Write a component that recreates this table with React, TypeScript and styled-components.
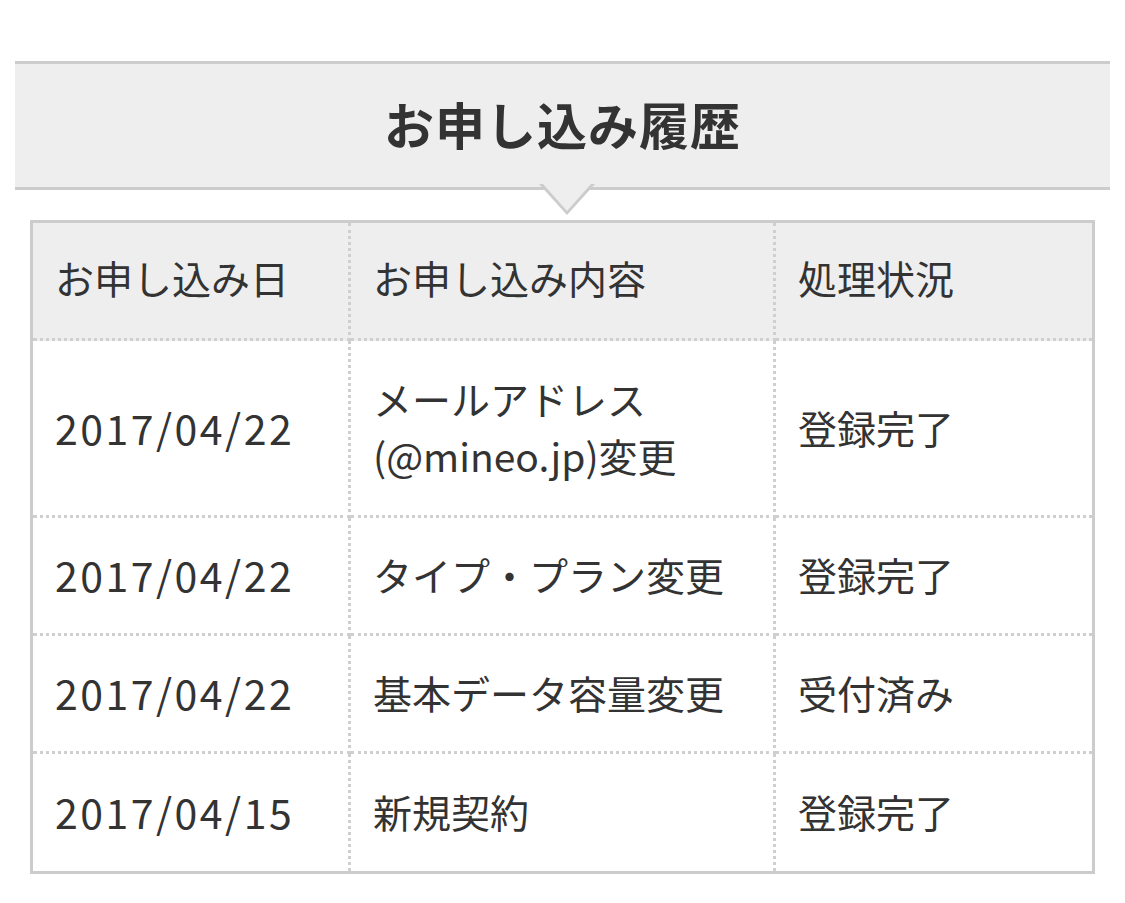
import React from "react";
import styled, { createGlobalStyle } from "styled-components";

const GlobalStyle = createGlobalStyle`
	body {
		margin: 0;
		background: #fff;
		font-family: "Noto Sans CJK JP", "Noto Sans", sans-serif;
		color: #333;
	}
`;

type Row = { date: string; content: string[]; status: string; height: number };

const rows: Row[] = [
	{ date: "2017/04/22", content: ["メールアドレス", "(@mineo.jp)変更"], status: "登録完了", height: 177 },
	{ date: "2017/04/22", content: ["タイプ・プラン変更"], status: "登録完了", height: 118 },
	{ date: "2017/04/22", content: ["基本データ容量変更"], status: "受付済み", height: 118 },
	{ date: "2017/04/15", content: ["新規契約"], status: "登録完了", height: 117 },
];

const DOTS = "3px dotted #cfcfcf";

export default function App() {
	return (
		<Page>
			<GlobalStyle />
			<Heading>
				<Title>お申し込み履歴</Title>
			</Heading>
			<HistoryTable>
				<colgroup>
					<col style={{ width: 318 }} />
					<col style={{ width: 425 }} />
					<col />
				</colgroup>
				<thead>
					<Tr $height={118}>
						<Th>お申し込み日</Th>
						<Th>お申し込み内容</Th>
						<Th $last>処理状況</Th>
					</Tr>
				</thead>
				<tbody>
					{rows.map((r, i) => (
						<Tr key={i} $height={r.height}>
							<DateCell $bottom={i === rows.length - 1}>{r.date}</DateCell>
							<Td $bottom={i === rows.length - 1}>
								{r.content.map((line, j) => (
									<Line key={j}>{line}</Line>
								))}
							</Td>
							<Td $bottom={i === rows.length - 1} $last>
								{r.status}
							</Td>
						</Tr>
					))}
				</tbody>
			</HistoryTable>
		</Page>
	);
}

const Page = styled.div`
	padding: 61px 15px 30px;
`;

const Heading = styled.div`
	position: relative;
	height: 123px;
	background: #eee;
	border-top: 3px solid #ccc;
	border-bottom: 3px solid #ccc;
	display: flex;
	align-items: center;
	justify-content: center;

	/* notch pointing down */
	&::before,
	&::after {
		content: "";
		position: absolute;
		left: 50%;
		width: 0;
		height: 0;
		border-style: solid;
	}
	&::before {
		top: 100%;
		margin-top: -3px;
		margin-left: -24px;
		border-width: 31px 28px 0 28px;
		border-color: #ccc transparent transparent transparent;
	}
	&::after {
		top: 100%;
		margin-top: -3px;
		margin-left: -20px;
		border-width: 27px 24px 0 24px;
		border-color: #eee transparent transparent transparent;
	}
`;

const Title = styled.h1`
	margin: 0;
	padding-bottom: 6px;
	font-size: 50px;
	font-weight: bold;
	color: #333;
	letter-spacing: 1px;
`;

const HistoryTable = styled.table`
	margin: 30px 15px 0;
	width: calc(100% - 30px);
	border-collapse: separate;
	border-spacing: 0;
	table-layout: fixed;
	border: 3px solid #ccc;
`;

const Tr = styled.tr<{ $height: number }>`
	height: ${(p) => p.$height}px;
`;

const Th = styled.th<{ $last?: boolean }>`
	background: #eee;
	text-align: left;
	font-weight: normal;
	font-size: 39px;
	padding: 0 22px 8px;
	border-right: ${(p) => (p.$last ? "none" : DOTS)};
	border-bottom: ${DOTS};
	vertical-align: middle;
`;

const Td = styled.td<{ $last?: boolean; $bottom?: boolean }>`
	font-size: 39px;
	line-height: 57px;
	padding: 0 22px 2px;
	border-right: ${(p) => (p.$last ? "none" : DOTS)};
	border-bottom: ${(p) => (p.$bottom ? "none" : DOTS)};
	vertical-align: middle;
`;

const DateCell = styled(Td)`
	font-size: 41px;
	letter-spacing: 2.5px;
`;

const Line = styled.div``;
